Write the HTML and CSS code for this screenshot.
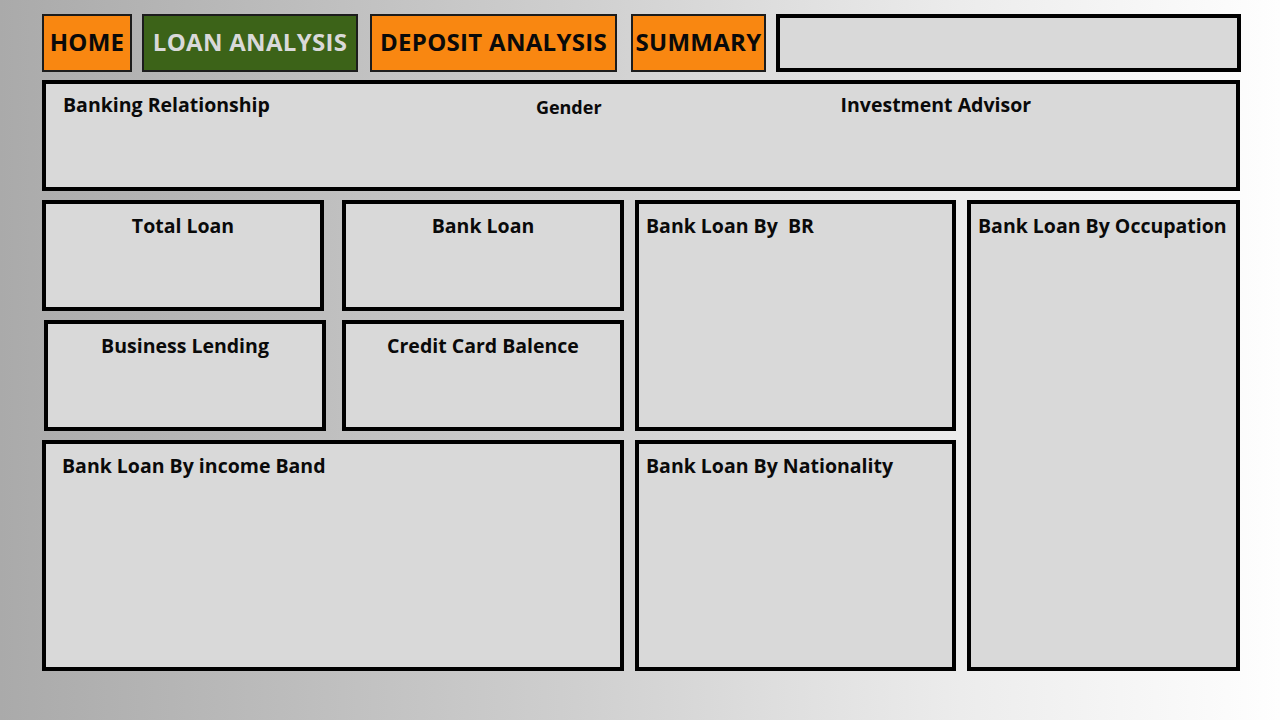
FILE: index.html
```html
<!DOCTYPE html>
<html>
<head>
<meta charset="utf-8">
<link rel="stylesheet" href="styles.css">
</head>
<body>
<div class="page">
  <nav class="nav">
    <div class="btn btn-home">HOME</div>
    <div class="btn btn-loan active">LOAN ANALYSIS</div>
    <div class="btn btn-deposit">DEPOSIT ANALYSIS</div>
    <div class="btn btn-summary">SUMMARY</div>
    <div class="search"></div>
  </nav>
  <section class="filters">
    <div class="filter f-br">Banking Relationship</div>
    <div class="filter f-gender">Gender</div>
    <div class="filter f-ia">Investment Advisor</div>
  </section>
  <section class="grid">
    <div class="card center c-total"><h3>Total Loan</h3></div>
    <div class="card center c-bank"><h3>Bank Loan</h3></div>
    <div class="card c-br"><h3>Bank Loan By&nbsp; BR</h3></div>
    <div class="card c-occ"><h3>Bank Loan By Occupation</h3></div>
    <div class="card center c-biz"><h3>Business Lending</h3></div>
    <div class="card center c-cc"><h3>Credit Card Balence</h3></div>
    <div class="card c-income"><h3>Bank Loan By income Band</h3></div>
    <div class="card c-nat"><h3>Bank Loan By Nationality</h3></div>
  </section>
</div>
</body>
</html>
```
FILE: styles.css
```css
* { box-sizing: border-box; margin: 0; padding: 0; }
html, body { width: 1280px; height: 720px; overflow: hidden; }
body {
  background: linear-gradient(90deg, #aaaaaa 0%, #cfcfcf 45%, #ececec 75%, #fefefe 100%);
  font-family: "Open Sans", "Liberation Sans", sans-serif;
  color: #0a0a0a;
}
.page { padding: 14px 0 0 42px; }

.nav { display: flex; height: 58px; }
.btn {
  border: 2px solid #1c1c1c;
  background: #f98711;
  font-weight: 700;
  font-size: 24px;
  display: flex;
  align-items: center;
  justify-content: center;
  letter-spacing: 0.3px;
  color: #0a0a0a;
  white-space: nowrap;
  padding-bottom: 3px;
}
.btn.active { background: #3c6318; color: #d9d9d9; }
.btn-home { width: 90px; }
.btn-loan { width: 216px; margin-left: 10px; }
.btn-deposit { width: 247px; margin-left: 12px; }
.btn-summary { width: 135px; margin-left: 14px; }
.search {
  width: 465px; margin-left: 10px;
  border: 4px solid #000;
  background: #d9d9d9;
}

.filters {
  margin-top: 8px;
  width: 1198px; height: 111px;
  border: 4px solid #000;
  background: #d9d9d9;
  display: flex;
  align-items: flex-start;
}
.filter { font-weight: 700; font-size: 19.5px; line-height: 26px; white-space: nowrap; }
.f-br { margin: 8px 0 0 17px; }
.f-gender { font-size: 18px; margin: 10px 0 0 266px; }
.f-ia { margin: 8px 0 0 239px; }

.grid {
  margin-top: 9px;
  width: 1198px;
  display: grid;
  grid-template-columns: 289px 282px 321px 273px;
  grid-template-rows: 111px 111px 231px;
  column-gap: 11px;
  row-gap: 9px;
}
.card {
  border: 4px solid #000;
  background: #d9d9d9;
  padding: 9px 0 0 7px;
}
.card h3 { font-weight: 700; font-size: 19.5px; line-height: 26px; white-space: nowrap; }
.card.center { padding: 9px 0 0 0; text-align: center; }
.c-total { grid-column: 1; grid-row: 1; width: 282px; }
.c-bank { grid-column: 2; grid-row: 1; }
.c-br { grid-column: 3; grid-row: 1 / 3; }
.c-occ { grid-column: 4; grid-row: 1 / 4; }
.c-biz { grid-column: 1; grid-row: 2; width: 282px; margin-left: 2px; }
.c-cc { grid-column: 2; grid-row: 2; }
.c-income { grid-column: 1 / 3; grid-row: 3; padding-left: 16px; }
.c-nat { grid-column: 3; grid-row: 3; }
```
